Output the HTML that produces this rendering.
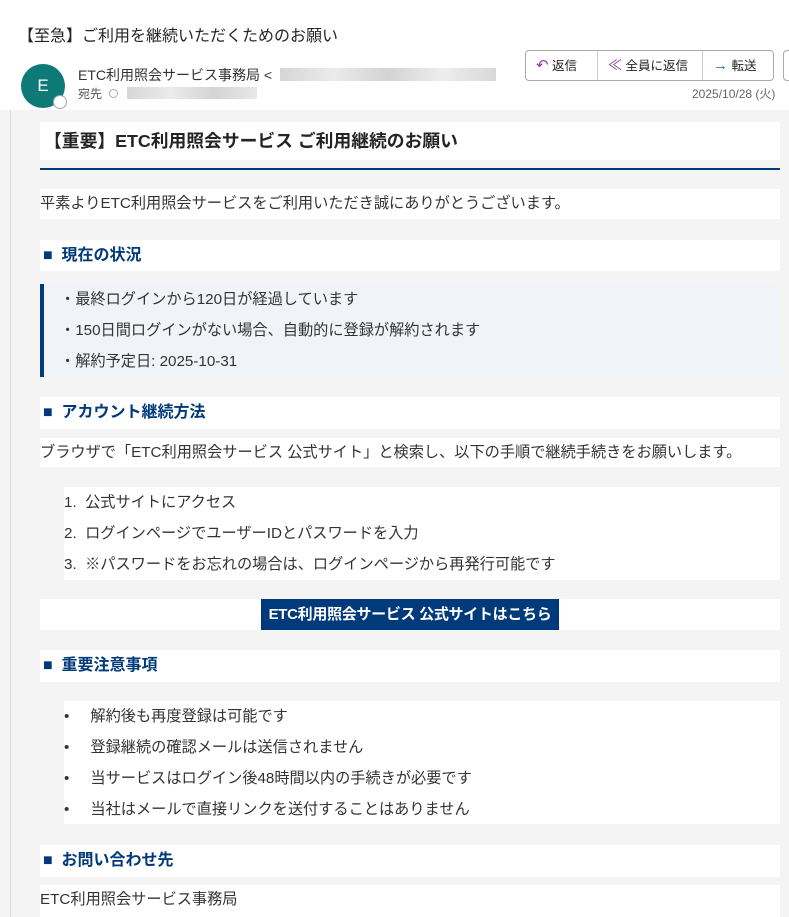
<!DOCTYPE html>
<html><head><meta charset="utf-8"><style>
*{margin:0;padding:0;box-sizing:border-box}
body{width:789px;height:917px;overflow:hidden;background:#fff;font-family:"Liberation Sans","Noto Sans CJK JP",sans-serif;color:#333;position:relative}
.a{position:absolute}
.w{position:absolute;background:#fff;left:40px;width:740px}
.h2{color:#003a7a;font-weight:bold;font-size:16px;padding-left:3px;line-height:32px}
.t{font-size:15.2px;line-height:30px}
</style></head><body>
<div class="a" style="left:18px;top:22px;font-size:16px;color:#242424">【至急】ご利用を継続いただくためのお願い</div>
<div class="a" style="left:21px;top:64px;width:44px;height:44px;border-radius:50%;background:#0d7a78;color:#fff;font-size:17px;text-align:center;line-height:44px">E</div>
<div class="a" style="left:53px;top:95px;width:14px;height:14px;border-radius:50%;background:#fff;border:1.5px solid #9aa8b5"></div>
<div class="a" style="left:78px;top:65px;font-size:14px;color:#333">ETC利用照会サービス事務局 &lt;</div>
<div class="a" style="left:280px;top:68px;width:216px;height:13px;background:linear-gradient(90deg,#ccc,#e6e6e6,#c8c8c8,#e9e9e9,#cfcfcf);opacity:.8"></div>
<div class="a" style="left:78px;top:85px;font-size:12px;color:#555">宛先 <span style="display:inline-block;width:9px;height:9px;border:1px solid #aab;border-radius:50%;margin-left:4px"></span></div>
<div class="a" style="left:127px;top:87px;width:130px;height:12px;background:linear-gradient(90deg,#ccc,#e6e6e6,#c9c9c9,#e2e2e2);opacity:.8"></div>
<div class="a" style="left:525px;top:50px;width:249px;height:31px;border:1px solid #aaa;border-radius:4px;font-size:12.5px;display:flex;color:#242424">
<div style="width:72px;border-right:1px solid #ccc;line-height:29px;padding-left:10px"><span style="color:#8a3fa0;font-size:15px">↶</span> 返信</div>
<div style="width:105px;border-right:1px solid #ccc;line-height:29px;padding-left:10px"><span style="color:#8a3fa0;font-size:14px">≪</span> 全員に返信</div>
<div style="line-height:29px;padding-left:10px"><span style="color:#1a64b0;font-size:15px">→</span> 転送</div></div>
<div class="a" style="left:783px;top:50px;width:20px;height:31px;border:1px solid #aaa;border-radius:4px"></div>
<div class="a" style="left:692px;top:85px;font-size:12px;color:#666">2025/10/28 (火)</div>
<div class="a" style="left:0;top:110px;width:789px;height:807px;background:#f4f4f4"></div>
<div class="a" style="left:10px;top:110px;width:1px;height:807px;background:#ddd"></div>
<div class="w" style="top:122px;height:38px;font-size:17.8px;font-weight:bold;line-height:38px;padding-left:4px;color:#242424">【重要】ETC利用照会サービス ご利用継続のお願い</div>
<div class="a" style="left:40px;top:168px;width:740px;height:2px;background:#003a7a"></div>
<div class="w t" style="top:189px;height:30px">平素よりETC利用照会サービスをご利用いただき誠にありがとうございます。</div>
<div class="w h2" style="top:240px;height:31px">■&nbsp; 現在の状況</div>
<div class="a t" style="left:40px;top:284px;width:740px;height:93px;background:#f0f4f8;border-left:4px solid #003a7a;padding:0 0 0 16px;line-height:31px">・最終ログインから120日が経過しています<br>・150日間ログインがない場合、自動的に登録が解約されます<br>・解約予定日: 2025-10-31</div>
<div class="w h2" style="top:397px;height:32px">■&nbsp; アカウント継続方法</div>
<div class="w t" style="top:438px;height:29px">ブラウザで「ETC利用照会サービス 公式サイト」と検索し、以下の手順で継続手続きをお願いします。</div>
<div class="w t" style="left:64px;width:716px;top:487px;height:93px;line-height:31px;padding-left:0">1.&nbsp; 公式サイトにアクセス<br>2.&nbsp; ログインページでユーザーIDとパスワードを入力<br>3.&nbsp; ※パスワードをお忘れの場合は、ログインページから再発行可能です</div>
<div class="w" style="top:599px;height:31px"></div>
<div class="a" style="left:261px;top:599px;width:298px;height:31px;background:#003a7a;color:#fff;font-weight:bold;font-size:15px;text-align:center;line-height:31px;letter-spacing:-0.3px">ETC利用照会サービス 公式サイトはこちら</div>
<div class="w h2" style="top:650px;height:32px">■&nbsp; 重要注意事項</div>
<div class="w t" style="left:64px;width:716px;top:701px;height:123px;line-height:31px;padding-left:0">•&nbsp;&nbsp;&nbsp;&nbsp; 解約後も再度登録は可能です<br>•&nbsp;&nbsp;&nbsp;&nbsp; 登録継続の確認メールは送信されません<br>•&nbsp;&nbsp;&nbsp;&nbsp; 当サービスはログイン後48時間以内の手続きが必要です<br>•&nbsp;&nbsp;&nbsp;&nbsp; 当社はメールで直接リンクを送付することはありません</div>
<div class="w h2" style="top:845px;height:32px">■&nbsp; お問い合わせ先</div>
<div class="w t" style="top:885px;height:32px">ETC利用照会サービス事務局</div>
</body></html>
